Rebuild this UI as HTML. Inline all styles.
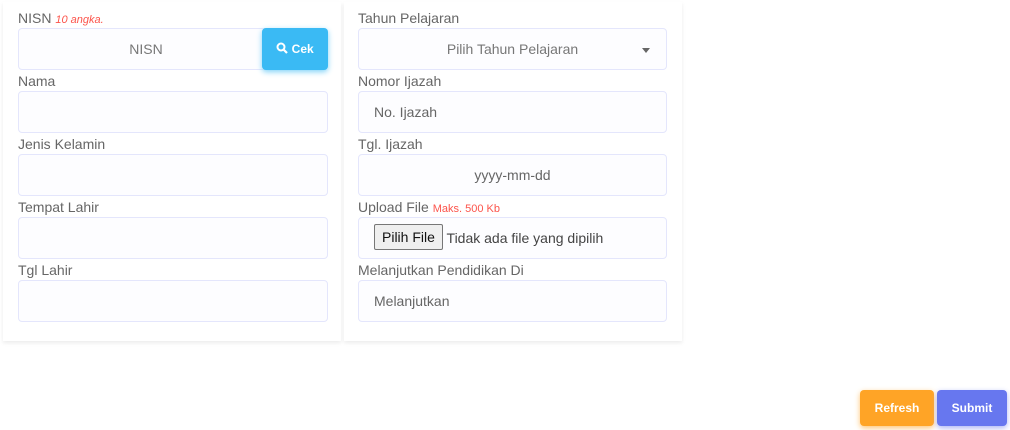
<!DOCTYPE html>
<html><head><style>
*{box-sizing:border-box;margin:0;padding:0}
body{width:1010px;height:430px;background:#fff;font-family:"Liberation Sans",sans-serif;position:relative;overflow:hidden;color:#6c757d}
.card{position:absolute;top:2px;height:339px;background:#fff;box-shadow:0 2px 4px rgba(0,0,0,0.08)}
.lbl{position:absolute;font-size:14px;color:#666;line-height:16px}
.inp{position:absolute;height:42px;background:#fdfdff;border:1px solid #e4e6fc;border-radius:4px;font-size:14px;color:#777;line-height:40px}
.red{color:#fc544b;font-size:11px}
.btn{position:absolute;color:#fff;font-weight:bold;font-size:12px;text-align:center;border-radius:4px}
</style></head><body>
<div class="card" style="left:3px;width:338px"></div>
<div class="card" style="left:344px;width:338px"></div>

<div class="lbl" style="left:18px;top:10px">NISN <i class="red">10 angka.</i></div>
<div class="inp" style="left:18px;top:28px;width:250px;text-align:center;padding-left:6px">NISN</div>
<div class="btn" style="left:262px;top:28px;width:66px;height:42px;line-height:42px;background:#3abaf4;box-shadow:0 2px 6px #82d3f8">
<svg width="12" height="12" viewBox="0 0 12 12" style="vertical-align:-1px"><circle cx="5" cy="5" r="3.5" stroke="#fff" stroke-width="2" fill="none"/><path d="M7.5 7.5L11 11" stroke="#fff" stroke-width="2.2"/></svg> Cek</div>

<div class="lbl" style="left:18px;top:73px">Nama</div>
<div class="inp" style="left:18px;top:91px;width:310px"></div>
<div class="lbl" style="left:18px;top:136px">Jenis Kelamin</div>
<div class="inp" style="left:18px;top:154px;width:310px"></div>
<div class="lbl" style="left:18px;top:199px">Tempat Lahir</div>
<div class="inp" style="left:18px;top:217px;width:310px"></div>
<div class="lbl" style="left:18px;top:262px">Tgl Lahir</div>
<div class="inp" style="left:18px;top:280px;width:310px"></div>

<div class="lbl" style="left:358px;top:10px">Tahun Pelajaran</div>
<div class="inp" style="left:358px;top:28px;width:309px;text-align:center">Pilih Tahun Pelajaran<span style="position:absolute;right:16px;top:19px;border-left:4px solid transparent;border-right:4px solid transparent;border-top:5px solid #666"></span></div>
<div class="lbl" style="left:358px;top:73px">Nomor Ijazah</div>
<div class="inp" style="left:358px;top:91px;width:309px;padding-left:15px;color:#666">No. Ijazah</div>
<div class="lbl" style="left:358px;top:136px">Tgl. Ijazah</div>
<div class="inp" style="left:358px;top:154px;width:309px;text-align:center;color:#666">yyyy-mm-dd</div>
<div class="lbl" style="left:358px;top:199px">Upload File <span class="red">Maks. 500 Kb</span></div>
<div class="inp" style="left:358px;top:217px;width:309px;padding-left:15px;color:#444"><span style="display:inline-block;border:1px solid #777;background:#efefef;border-radius:2px;height:26px;line-height:24px;padding:0 7px;color:#111;vertical-align:1px">Pilih File</span> Tidak ada file yang dipilih</div>
<div class="lbl" style="left:358px;top:262px">Melanjutkan Pendidikan Di</div>
<div class="inp" style="left:358px;top:280px;width:309px;padding-left:15px;color:#666">Melanjutkan</div>

<div class="btn" style="left:860px;top:390px;width:74px;height:36px;line-height:36px;background:#ffa426;box-shadow:0 2px 6px #ffc473">Refresh</div>
<div class="btn" style="left:937px;top:390px;width:70px;height:36px;line-height:36px;background:#6777ef;box-shadow:0 2px 6px #acb5f6">Submit</div>
</body></html>
